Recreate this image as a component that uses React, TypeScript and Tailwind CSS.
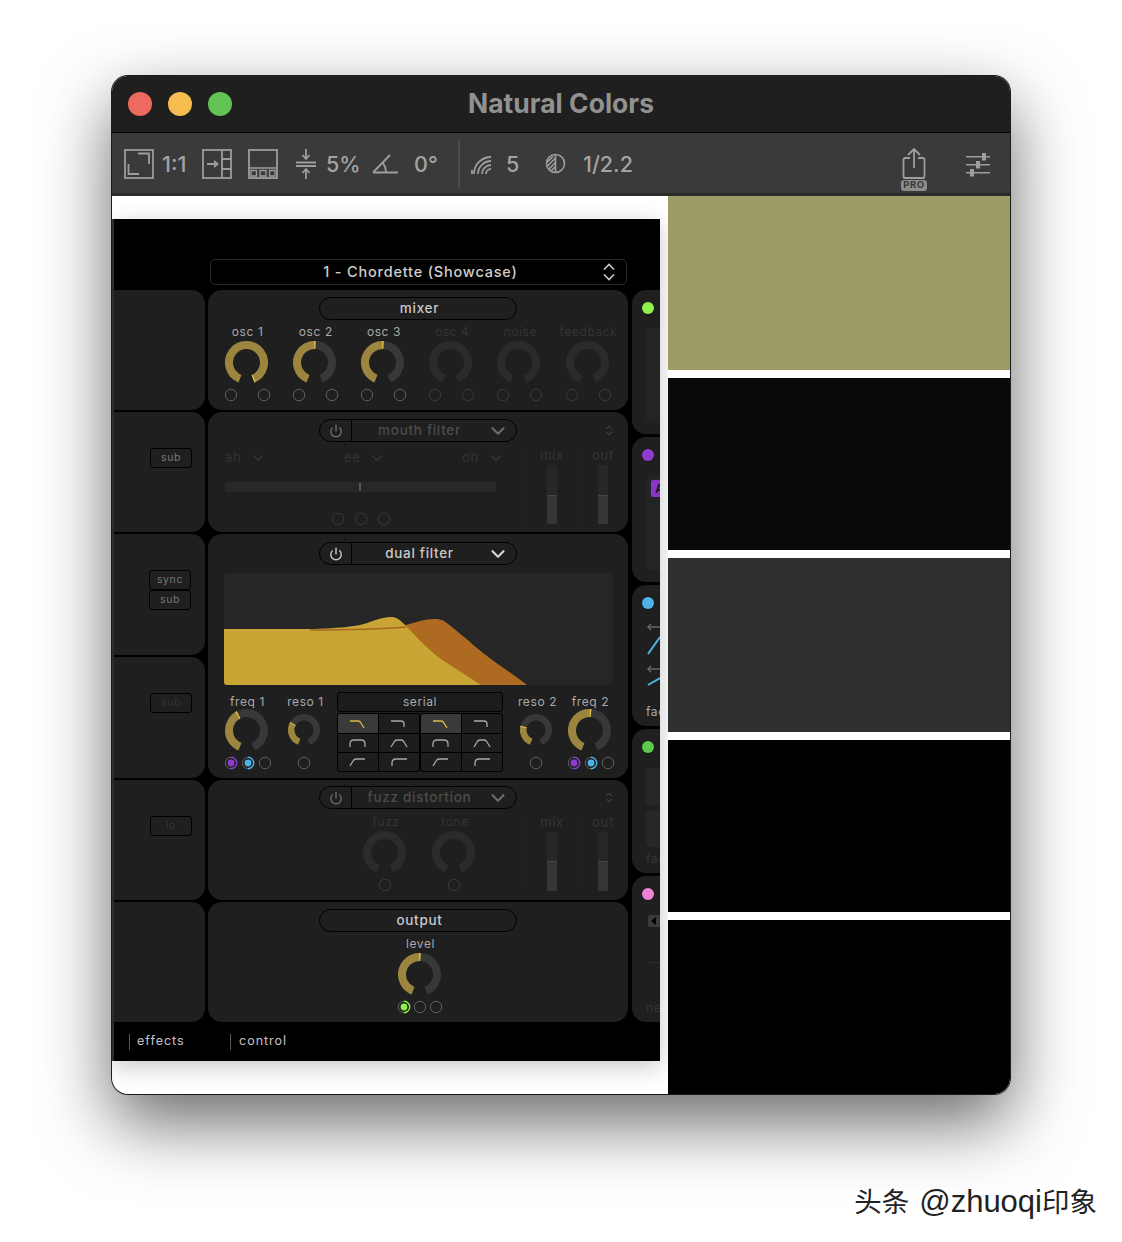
import { ChevronDown, Power } from 'lucide-react'

const polar = (cx: number, cy: number, r: number, deg: number) => {
  const a = ((deg - 90) * Math.PI) / 180
  return [cx + r * Math.cos(a), cy + r * Math.sin(a)]
}

const arc = (cx: number, cy: number, r: number, from: number, to: number) => {
  const [x1, y1] = polar(cx, cy, r, from)
  const [x2, y2] = polar(cx, cy, r, to)
  return `M${x1} ${y1} A${r} ${r} 0 ${to - from > 180 ? 1 : 0} 1 ${x2} ${y2}`
}

function Knob({ size = 43, value, dim }: { size?: number; value?: number; dim?: boolean }) {
  const c = size / 2
  const w = size > 40 ? 8 : 6.5
  const r = c - w / 2
  const track = dim ? '#2b2b2b' : '#383838'
  return (
    <svg width={size} height={size} viewBox={`0 0 ${size} ${size}`} className="block">
      <path d={arc(c, c, r, -158, 158)} fill="none" stroke={track} strokeWidth={w} />
      {value !== undefined && (
        <>
          <path d={arc(c, c, r, -158, value)} fill="none" stroke="#9c853e" strokeWidth={w} />
          <path d={arc(c, c, r, value - 4, value)} fill="none" stroke="#e3c24e" strokeWidth={w} />
        </>
      )}
    </svg>
  )
}

function Port({ dot, dim }: { dot?: string; dim?: boolean }) {
  return (
    <svg width="14" height="14" viewBox="0 0 14 14" className="block">
      <circle cx="7" cy="7" r="5.7" fill="none" stroke={dim ? '#3a3a3a' : '#606060'} strokeWidth="1" />
      {dot && (
        <>
          <circle cx="7" cy="7" r="3.4" fill={dot} />
          <path d="M7 1.3 A5.7 5.7 0 0 1 7 12.7" fill="none" stroke={dot} strokeWidth="1.4" />
        </>
      )}
    </svg>
  )
}

function UpDown({ className }: { className: string }) {
  return (
    <svg viewBox="0 0 16 24" fill="none" stroke="currentColor" strokeWidth="2" className={className}>
      <path d="M2 9 L8 3 L14 9" />
      <path d="M2 15 L8 21 L14 15" />
    </svg>
  )
}

function Pill({ title, power, dim }: { title: string; power?: boolean; dim?: boolean }) {
  const tone = dim ? 'text-[#4c4c4c]' : 'text-[#c9c9c9]'
  return (
    <div className="mx-auto flex h-[23px] w-[198px] items-center rounded-full border-[1.5px] border-black">
      {power && (
        <div className="flex h-full w-[32px] items-center justify-center border-r border-black">
          <Power size={14} strokeWidth={2.4} className={dim ? 'text-[#6a6a6a]' : 'text-[#c9c9c9]'} />
        </div>
      )}
      <div className={`flex-1 text-center text-[13.5px] font-medium tracking-[0.7px] ${power ? '' : 'pl-[3px]'} ${tone}`}>{title}</div>
      {power && <ChevronDown size={22} strokeWidth={2.4} className={`mr-[7px] ${dim ? 'text-[#6a6a6a]' : 'text-[#d4d4d4]'}`} />}
    </div>
  )
}

function Label({ children, dim }: { children: string; dim?: boolean }) {
  return (
    <div className={`h-[14px] whitespace-nowrap pl-[3px] text-center text-[12px] leading-[14px] tracking-[0.6px] ${dim ? 'text-[#343434]' : 'text-[#a9a9a9]'}`}>
      {children}
    </div>
  )
}

function Channel({ label, value, dim }: { label: string; value?: number; dim?: boolean }) {
  return (
    <div className="flex flex-col items-center">
      <Label dim={dim}>{label}</Label>
      <div className="mt-[2px]">
        <Knob value={value} dim={dim} />
      </div>
      <div className="mt-[4px] flex gap-[19px] pl-[2px]">
        <Port dim={dim} />
        <Port dim={dim} />
      </div>
    </div>
  )
}

function Fader({ label, fill }: { label: string; fill: number }) {
  return (
    <div className="flex w-[51px] flex-col items-center border-l border-[#232323]">
      <div className="h-[14px] text-[13px] leading-[14px] tracking-[0.6px] text-[#343434]">{label}</div>
      <div className="mt-[3px] flex h-[59px] w-[10px] flex-col justify-end bg-[#272727]">
        <div className="border-t border-[#444] bg-[#353535]" style={{ height: fill }} />
      </div>
    </div>
  )
}

function SideKey({ label, dim }: { label: string; dim?: boolean }) {
  return (
    <div className={`flex h-[20px] w-[42px] items-center justify-center rounded-[3px] border border-black text-[10.5px] tracking-[0.6px] ${dim ? 'text-[#343434]' : 'text-[#777]'}`}>
      {label}
    </div>
  )
}

function LeftPanel({ h, children, pr = 'pr-[13px]' }: { h: string; children?: React.ReactNode; pr?: string }) {
  return <div className={`flex ${h} items-start justify-end rounded-r-[14px] bg-[#1f1f1f] pt-[36px] ${pr}`}>{children}</div>
}

const shapes = [
  ['M2 3 H10 Q12 3 13 5 L16 10', 'M2 3 H12 Q15 3 15 6 V9'],
  ['M2 10 V7 Q2 3 6 3 H13 Q17 3 17 7 V10', 'M2 10 L5 5 Q6 3 8 3 H12 Q14 3 15 5 L18 10'],
  ['M2 10 L5 5 Q6 3 8 3 H17', 'M3 10 V7 Q3 3 7 3 H18'],
]

function FilterBank() {
  return (
    <div className="grid flex-1 grid-cols-2 grid-rows-[19px_18px_18px] gap-px overflow-hidden rounded-[3px] border border-black bg-black">
      {shapes.flatMap((row, y) =>
        row.map((d, x) => (
          <div key={`${y}-${x}`} className={`flex items-center justify-center ${y === 0 && x === 0 ? 'bg-[#3a3a3a]' : 'bg-[#1d1d1d]'}`}>
            <svg width="20" height="12" viewBox="0 0 20 12" fill="none" stroke={y === 0 && x === 0 ? '#e0b84a' : '#a8a8a8'} strokeWidth="1.3">
              <path d={d} />
            </svg>
          </div>
        )),
      )}
    </div>
  )
}

function SerialBlock() {
  return (
    <div className="flex w-[166px] flex-col">
      <div className="flex h-[20px] items-center justify-center rounded-[3px] border border-black bg-[#1c1c1c] text-[12px] tracking-[0.6px] text-[#a9a9a9]">
        serial
      </div>
      <div className="mt-[1px] flex">
        <FilterBank />
        <FilterBank />
      </div>
    </div>
  )
}

function FilterChannel({ label, size, value, ports, width }: { label: string; size: number; value: number; ports: (string | undefined)[]; width: string }) {
  return (
    <div className={`flex flex-col items-center ${width}`}>
      <div className="mt-[3px]">
        <Label>{label}</Label>
      </div>
      <div className="-mt-[1px] flex h-[44px] items-center">
        <Knob size={size} value={value} />
      </div>
      <div className={`mt-[4px] flex gap-[3px] ${ports.length > 1 ? 'pl-[4px]' : ''}`}>
        {ports.map((dot, i) => (
          <Port key={i} dot={dot} />
        ))}
      </div>
    </div>
  )
}

function FilterGraph() {
  return (
    <div className="ml-[16px] mt-[8px] h-[112px] w-[389px] overflow-hidden rounded-[3px] bg-[#262626]">
      <svg width="389" height="112" viewBox="0 0 389 112" className="block">
        <path d="M175 54 L196 48 C204 46 214 45 220 48 C226 52 235 60 245 68 C262 84 285 98 303 112 H200 Z" fill="#ad6a20" />
        <path d="M0 56 H90 C115 55 125 54 136 52 C146 50 155 44 168 44 C174 44 178 49 184 55 C195 66 205 78 220 88 C232 96 245 104 257 112 H0 Z" fill="#c9a535" />
        <path d="M86 57 C125 57 160 56 182 54" fill="none" stroke="#a8691f" strokeWidth="1.3" />
      </svg>
    </div>
  )
}

function RightPanel({ h, dot, children }: { h: string; dot: string; children?: React.ReactNode }) {
  return (
    <div className={`${h} overflow-hidden rounded-l-[14px] bg-[#1f1f1f] pl-[10px] pt-[12px]`}>
      <div className={`h-[12px] w-[12px] rounded-full ${dot}`} />
      {children}
    </div>
  )
}

function Plugin() {
  return (
    <div className="flex h-[842px] w-[548px] flex-col border-l-[2px] border-[#2e2e2e] bg-black font-['Inter',sans-serif] shadow-[0_6px_22px_rgba(0,0,0,0.22)]">
      <div className="h-[71px] pl-[96px] pt-[40px]">
        <div className="relative flex h-[26px] w-[417px] items-center justify-center rounded-[5px] border border-[#2a2a2a] pl-[4px] text-[14.5px] font-medium tracking-[0.8px] text-[#cfcfcf]">
          1 - Chordette (Showcase)
          <UpDown className="absolute right-[10px] top-[2px] h-[20px] w-[14px] text-[#c9c9c9]" />
        </div>
      </div>

      <div className="flex h-[732px]">
        <div className="flex w-[91px] flex-col gap-[2px]">
          <LeftPanel h="h-[120px]" />
          <LeftPanel h="h-[120px]">
            <SideKey label="sub" />
          </LeftPanel>
          <LeftPanel h="h-[121px]" pr="pr-[14px]">
            <div className="flex flex-col">
              <SideKey label="sync" />
              <SideKey label="sub" />
            </div>
          </LeftPanel>
          <LeftPanel h="h-[121px]">
            <SideKey label="sub" dim />
          </LeftPanel>
          <LeftPanel h="h-[120px]">
            <SideKey label="lo" dim />
          </LeftPanel>
          <LeftPanel h="h-[120px]" />
        </div>

        <div className="ml-[3px] flex w-[420px] flex-col gap-[2px]">
          <section className="h-[120px] rounded-[14px] bg-[#1f1f1f] pt-[7px]">
            <Pill title="mixer" />
            <div className="mt-[5px] grid grid-cols-[repeat(6,68.2px)] pl-[4px]">
              <Channel label="osc 1" value={158} />
              <Channel label="osc 2" value={3} />
              <Channel label="osc 3" value={3} />
              <Channel label="osc 4" dim />
              <Channel label="noise" dim />
              <Channel label="feedback" dim />
            </div>
          </section>

          <section className="h-[120px] rounded-[14px] bg-[#1f1f1f] pt-[7px]">
            <div className="relative">
              <Pill title="mouth filter" power dim />
              <UpDown className="absolute right-[15px] top-[6px] h-[11px] w-[8px] text-[#555]" />
            </div>
            <div className="mt-[6px] flex pl-[17px]">
              <div className="w-[301px]">
                <div className="grid h-[16px] w-[271px] grid-cols-[119px_118px_34px] text-[13px] tracking-[0.6px] text-[#343434]">
                  <div className="flex items-center gap-[8px]">ah<ChevronDown size={18} strokeWidth={2.2} className="shrink-0" /></div>
                  <div className="flex items-center gap-[8px]">ee<ChevronDown size={18} strokeWidth={2.2} className="shrink-0" /></div>
                  <div className="flex items-center gap-[8px]">oh<ChevronDown size={18} strokeWidth={2.2} className="shrink-0" /></div>
                </div>
                <div className="relative mt-[18px] h-[10px] w-[271px] bg-[#282828]">
                  <div className="absolute left-[134px] top-[1px] h-[8px] w-[2px] bg-[#555]" />
                </div>
                <div className="ml-[106px] mt-[20px] flex gap-[9px]">
                  <Port dim />
                  <Port dim />
                  <Port dim />
                </div>
              </div>
              <Fader label="mix" fill={29} />
              <Fader label="out" fill={29} />
            </div>
          </section>

          <section className="h-[244px] rounded-[14px] bg-[#1f1f1f] pt-[8px]">
            <Pill title="dual filter" power />
            <FilterGraph />
            <div className="mt-[7px] flex pl-[16px]">
              <FilterChannel label="freq 1" size={43} value={-27} ports={['#8f3bd0', '#4fb3e8', undefined]} width="w-[44px]" />
              <FilterChannel label="reso 1" size={32} value={-60} ports={[undefined]} width="ml-[19px] w-[34px]" />
              <div className="ml-[16px]">
                <SerialBlock />
              </div>
              <FilterChannel label="reso 2" size={32} value={-75} ports={[undefined]} width="ml-[16px] w-[34px]" />
              <FilterChannel label="freq 2" size={43} value={5} ports={['#8f3bd0', '#4fb3e8', undefined]} width="ml-[14px] w-[44px]" />
            </div>
          </section>

          <section className="h-[120px] rounded-[14px] bg-[#1f1f1f] pt-[6px]">
            <div className="relative">
              <Pill title="fuzz distortion" power dim />
              <UpDown className="absolute right-[15px] top-[6px] h-[11px] w-[8px] text-[#555]" />
            </div>
            <div className="mt-[6px] flex">
              <div className="flex w-[318px] pl-[142px]">
                <div className="flex w-[69px] flex-col items-center">
                  <Label dim>fuzz</Label>
                  <div className="mt-[2px]"><Knob dim /></div>
                  <div className="mt-[4px]"><Port dim /></div>
                </div>
                <div className="flex w-[69px] flex-col items-center">
                  <Label dim>tone</Label>
                  <div className="mt-[2px]"><Knob dim /></div>
                  <div className="mt-[4px]"><Port dim /></div>
                </div>
              </div>
              <Fader label="mix" fill={30} />
              <Fader label="out" fill={30} />
            </div>
          </section>

          <section className="h-[120px] rounded-[14px] bg-[#1f1f1f] pt-[7px]">
            <Pill title="output" />
            <div className="mt-[5px] flex flex-col items-center pl-[2px]">
              <Label>level</Label>
              <div className="mt-[2px]"><Knob value={3} /></div>
              <div className="mt-[4px] flex gap-[2px] pl-[2px]">
                <Port dot="#8ef04a" />
                <Port />
                <Port />
              </div>
            </div>
          </section>
        </div>

        <div className="ml-[4px] flex w-[28px] flex-col gap-[3px]">
          <RightPanel h="h-[144px]" dot="bg-[#8ef04a]">
            <div className="ml-[4px] mt-[14px] h-[95px] rounded-l-[6px] bg-[#242424]" />
          </RightPanel>
          <RightPanel h="h-[145px]" dot="bg-[#8f3bd0]">
            <div className="ml-[4px] mt-[14px] h-[95px] rounded-l-[6px] bg-[#242424] pl-[5px] pt-[5px]">
              <div className="h-[17px] overflow-hidden rounded-l-[2px] bg-[#8a35c9] pl-[4px] text-[12px] font-bold leading-[17px] text-[#1a1a1a]">A</div>
            </div>
          </RightPanel>
          <RightPanel h="h-[141px]" dot="bg-[#4fb3e8]">
            <svg width="18" height="70" viewBox="0 0 18 70" className="ml-[4px] mt-[10px] block" fill="none">
              <path d="M2 8 H14 M5 5 L2 8 L5 11" stroke="#666" strokeWidth="1.4" />
              <path d="M2 35 L14 18" stroke="#4fb3e8" strokeWidth="2" />
              <path d="M2 50 H14 M5 47 L2 50 L5 53" stroke="#666" strokeWidth="1.4" />
              <path d="M2 66 L14 59" stroke="#4fb3e8" strokeWidth="2" />
            </svg>
            <div className="ml-[4px] mt-[14px] whitespace-nowrap text-[12px] tracking-[0.6px] text-[#a9a9a9]">fade</div>
          </RightPanel>
          <RightPanel h="h-[144px]" dot="bg-[#5cc94a]">
            <div className="ml-[4px] mt-[15px] h-[37px] rounded-l-[4px] bg-[#272727]" />
            <div className="ml-[4px] mt-[5px] h-[37px] rounded-l-[4px] bg-[#272727]" />
            <div className="ml-[4px] mt-[3px] whitespace-nowrap text-[12px] tracking-[0.6px] text-[#343434]">fade</div>
          </RightPanel>
          <RightPanel h="h-[146px]" dot="bg-[#ee82d4]">
            <div className="ml-[6px] mt-[15px] flex h-[12px] w-[18px] items-center rounded-l-[2px] bg-[#3a3a3a] pl-[3px]">
              <div className="h-0 w-0 border-y-[4px] border-r-[5px] border-y-transparent border-r-black" />
            </div>
            <div className="ml-[6px] mt-[35px] h-px bg-[#2e2e2e]" />
            <div className="ml-[4px] mt-[36px] whitespace-nowrap text-[12px] tracking-[0.6px] text-[#343434]">ne</div>
          </RightPanel>
        </div>
      </div>

      <div className="flex h-[39px] items-center pl-[15px] text-[12.5px] tracking-[1px] text-[#c4c4c4]">
        <div className="h-[16px] w-px bg-[#555]" />
        <div className="ml-[7px] w-[93px]">effects</div>
        <div className="h-[16px] w-px bg-[#555]" />
        <div className="ml-[8px]">control</div>
      </div>
    </div>
  )
}

function Toolbar() {
  const text = 'pt-[2px] text-[21.5px] font-medium leading-none text-[#a3a3a3]'
  const stroke = { fill: 'none', stroke: '#9d9d9d', strokeWidth: 1.8 }
  return (
    <div className="flex h-[64px] shrink-0 items-center border-t border-black border-b-[3px] border-b-[#2b2b2b] bg-[#3a3a3a] pl-[12px] pt-[1px]">
      <svg width="30" height="30" viewBox="0 0 30 30" {...stroke}>
        <rect x="1" y="1" width="28" height="28" />
        <path d="M14 4.5 H25 V15 M4.5 15 V25 H15" />
      </svg>
      <span className={`${text} ml-[8px] w-[40px]`}>1:1</span>
      <svg width="30" height="30" viewBox="0 0 30 30" {...stroke}>
        <rect x="1" y="1" width="28" height="28" />
        <path d="M20 1 V29 M20 10 H29 M20 20 H29 M5 15 H15 M12 12 L15.5 15 L12 18" />
      </svg>
      <svg width="30" height="30" viewBox="0 0 30 30" className="ml-[16px]" {...stroke}>
        <rect x="1" y="1" width="28" height="28" />
        <path d="M1 19 H29 M3 21.5 H8.5 V27 H3 Z M12 21.5 H18 V27 H12 Z M21.5 21.5 H27 V27 H21.5 Z" strokeWidth="1.3" />
      </svg>
      <svg width="20" height="32" viewBox="0 0 20 32" className="ml-[18px]" {...stroke}>
        <path d="M0 14.5 H20 M0 18 H20 M10 1 V10 M6.5 7 L10 11 L13.5 7 M10 31 V22 M6.5 25 L10 21 L13.5 25" />
      </svg>
      <span className={`${text} ml-[10px] w-[46px]`}>5%</span>
      <svg width="26" height="20" viewBox="0 0 26 20" {...stroke}>
        <path d="M1 18.5 H26 M1 18.5 L18 1 M11 9 Q14 13 14 18" />
      </svg>
      <span className={`${text} ml-[16px] w-[44px]`}>0°</span>
      <div className="h-[48px] w-[2px] bg-[#4d4d4d]" />
      <svg width="20" height="20" viewBox="0 0 20 20" className="ml-[11px]" fill="none" stroke="#9d9d9d" strokeWidth="1.8">
        <path d="M15 20 A5 5 0 0 1 20 15 M11 20 A9 9 0 0 1 20 11 M7 20 A13 13 0 0 1 20 7 M3 20 A17 17 0 0 1 20 3 M1 20 L1 16" />
      </svg>
      <span className={`${text} ml-[15px] w-[39px]`}>5</span>
      <svg width="21" height="21" viewBox="0 0 21 21" fill="none" stroke="#9d9d9d" strokeWidth="1.6">
        <circle cx="10.5" cy="10.5" r="9" />
        <path d="M10.5 1.5 V19.5 M2.5 9 L8 3.5 M2 13.5 L10.5 5 M3.5 16.5 L10.5 9.5 M6 18 L10.5 13.5" />
      </svg>
      <span className={`${text} ml-[17px]`}>1/2.2</span>
      <div className="ml-auto mt-[12px] flex w-[26px] flex-col items-center">
        <svg width="24" height="31" viewBox="0 0 24 31" {...stroke} strokeLinejoin="round">
          <path d="M8 10 H3 Q1.5 10 1.5 12 V28 Q1.5 30 3 30 H21 Q22.5 30 22.5 28 V12 Q22.5 10 21 10 H16 M12 20 V1 M6 7 L12 1 L18 7" />
        </svg>
        <div className="mt-[1px] flex h-[11px] w-[26px] items-center justify-center rounded-[3px] bg-[#8c8c8c] text-[9.5px] font-bold tracking-[0.6px] text-[#3a3a3a]">PRO</div>
      </div>
      <svg width="24" height="24" viewBox="0 0 24 24" className="ml-[39px] mr-[20px] mt-[3px]" fill="#9d9d9d">
        <path d="M0 3 H24 V4.6 H0 Z M0 11 H24 V12.6 H0 Z M0 19 H24 V20.6 H0 Z" />
        <rect x="16" y="0" width="4" height="7.5" />
        <rect x="10" y="8" width="4" height="7.5" />
        <rect x="4" y="16" width="4" height="7.5" />
      </svg>
    </div>
  )
}

export default function App() {
  return (
    <div className="flex h-[1242px] w-[1122px] flex-col overflow-hidden bg-white pl-[112px] pt-[76px] font-['Inter',sans-serif]">
      <div className="flex h-[1018px] w-[898px] flex-col overflow-hidden rounded-[16px] bg-white shadow-[0_0_0_1px_#1c1c1c,0_28px_70px_rgba(0,0,0,0.6)]">
        <div className="relative flex h-[56px] shrink-0 items-center gap-[16px] bg-[#1f1f1f] pl-[16px]">
          <div className="h-[24px] w-[24px] rounded-full bg-[#ee6a5f]" />
          <div className="h-[24px] w-[24px] rounded-full bg-[#f5bd4f]" />
          <div className="h-[24px] w-[24px] rounded-full bg-[#61c454]" />
          <div className="absolute inset-x-0 top-[12px] text-center text-[26.5px] font-bold leading-[30px] text-[#919191]">Natural Colors</div>
        </div>
        <Toolbar />
        <div className="flex flex-1">
          <div className="w-[556px] pt-[23px]">
            <Plugin />
          </div>
          <div className="relative flex flex-1 flex-col gap-[8px] bg-white">
            <div className="h-[174px] bg-[#9d9c66]" />
            <div className="h-[172px] bg-[#090909]" />
            <div className="h-[174px] bg-[#303030]" />
            <div className="h-[172px] bg-black" />
            <div className="h-[174px] bg-black" />
          </div>
        </div>
      </div>
      <div className="relative mr-[25px] mt-[90px] self-end whitespace-nowrap font-['Liberation_Sans','Noto_Sans_CJK_SC',sans-serif] text-[27.5px] leading-[36px] text-[#222] [text-shadow:0_1px_1px_rgba(255,255,255,0.9)]">
        头条<span className="ml-[10px] text-[31px]">@zhuoqi</span>印象
      </div>
    </div>
  )
}
